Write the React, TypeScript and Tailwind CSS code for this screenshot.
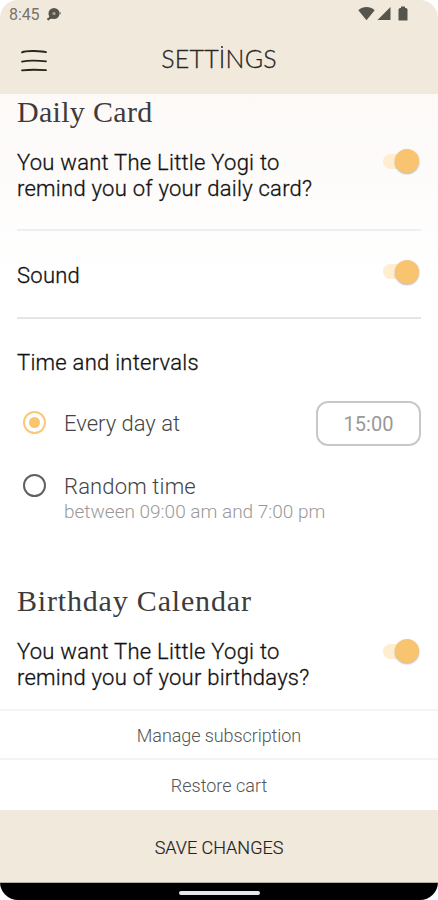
import { useState } from 'react'

type ToggleProps = {
  label: string
  checked: boolean
  onChange: () => void
}

function Toggle({ label, checked, onChange }: ToggleProps) {
  return (
    <button
      role="switch"
      aria-checked={checked}
      aria-label={label}
      onClick={onChange}
      className={`flex h-6 w-9 shrink-0 items-center ${checked ? 'justify-end' : 'justify-start'}`}
    >
      <span className="flex h-[15px] w-9 items-center rounded-full bg-[#feedcf]">
        <span
          className={`h-6 w-6 shrink-0 rounded-full bg-[#f9c46f] shadow-[0_1px_2px_rgba(0,0,0,0.3)] ${checked ? 'ml-auto' : ''}`}
        />
      </span>
    </button>
  )
}

function Radio({ checked }: { checked: boolean }) {
  return (
    <span
      className={`flex h-[23px] w-[23px] shrink-0 items-center justify-center rounded-full border-2 ${checked ? 'border-[#fac879]' : 'border-[#606060]'}`}
    >
      {checked && <span className="h-[11px] w-[11px] rounded-full bg-[#fbc46c]" />}
    </span>
  )
}

function StatusBar() {
  return (
    <div className="flex h-7 items-center justify-between pr-[30px] pl-[9px] text-[#57544c]">
      <div className="flex items-center gap-2 pt-px">
        <span className="text-base font-normal tracking-[-0.1px] text-[#77736b]">8:45</span>
        <svg className="h-4 w-4" viewBox="0 0 16 16" fill="currentColor">
          <circle cx="7" cy="6.5" r="5.5" />
          <circle cx="1.4" cy="12.1" r="1.3" />
          <path d="M3 8.5L1 12h3.5L6 9.5z" />
          <circle cx="7" cy="6.5" r="1.6" fill="#aaa69d" />
          <path d="M12.5 4.5l1.5 1v1.5l-1.5 1z" opacity="0.6" />
        </svg>
      </div>
      <div className="flex items-center pb-px">
        <svg className="h-[15px] w-[17px]" viewBox="0 0 17 15" fill="currentColor">
          <path d="M0.3 4.2C5 -.1 12 -.1 16.7 4.2L8.5 14.2z" />
        </svg>
        <svg className="ml-0.5 h-[15px] w-[14px]" viewBox="0 0 14 15" fill="currentColor">
          <path d="M13.5 1v13H.5z" />
        </svg>
        <svg className="ml-[7px] h-[15px] w-[10px]" viewBox="0 0 10 15" fill="currentColor">
          <path d="M3 .5h4V2h1.3L9.5 3.2V14.5h-9V3.2L1.7 2H3z" />
        </svg>
      </div>
    </div>
  )
}

export default function App() {
  const [dailyCard, setDailyCard] = useState(true)
  const [sound, setSound] = useState(true)
  const [birthdays, setBirthdays] = useState(true)
  const [interval, setIntervalType] = useState('daily')

  return (
    <div className="bg-white font-['Roboto',sans-serif]">
      <div className="flex h-[900px] w-[438px] flex-col overflow-hidden rounded-[18px] bg-white">
        {/* Header */}
        <header className="h-[94px] shrink-0 bg-[#f1eadc]">
          <StatusBar />
          <div className="grid h-[62px] grid-cols-[80px_1fr_80px] items-center">
            <button aria-label="Menu" className="pt-[3px] pl-[20px]">
              <svg className="h-6 w-7" viewBox="0 0 28 24" fill="none" stroke="#29251f" strokeWidth="1.8" strokeLinecap="round">
                <path d="M2 3.4Q5 1.8 14 2T26 3.2" />
                <path d="M2 12.6Q8 11.4 14 11.6T26 12.4" />
                <path d="M2 21.4Q12 20.2 26 21.2" />
              </svg>
            </button>
            <h1 className="pb-[2px] text-center font-['Lato',sans-serif] text-[25px] leading-none font-light tracking-[0.2px] text-[#29251f] [-webkit-text-stroke:0.3px_#29251f]">
              SETT
              <span className="relative">
                I
                <span className="absolute top-[3px] left-1/2 h-[2px] w-[2px] -translate-x-1/2 rounded-full bg-[#29251f]" />
              </span>
              NGS
            </h1>
          </div>
        </header>

        {/* Settings list */}
        <main className="h-[615px] shrink-0 bg-linear-to-b from-[#fcf9f7] to-white to-30% px-[17px]">
          <section>
            <h2 className="h-[55px] pt-0.5 font-['Liberation_Serif',serif] text-[30px] leading-8 tracking-[0.3px] text-[#3c3c3c]">Daily Card</h2>
            <div className="flex h-[80px] items-start justify-between pr-[2px]">
              <p className="pt-px text-[22px] leading-[26px] font-light tracking-[0.26px] text-[#111] [-webkit-text-stroke:0.3px_#111]">
                You want The Little Yogi to
                <br />
                remind you of your daily card?
              </p>
              <Toggle label="Daily card reminder" checked={dailyCard} onChange={() => setDailyCard(!dailyCard)} />
            </div>
            <div className="h-[2px] bg-[#efefef]" />
            <div className="flex h-[86px] items-center justify-between pr-[2px]">
              <span className="pt-[3px] text-[22px] font-light tracking-[0.26px] text-[#111] [-webkit-text-stroke:0.3px_#111]">Sound</span>
              <div className="pb-[5px]">
                <Toggle label="Sound" checked={sound} onChange={() => setSound(!sound)} />
              </div>
            </div>
            <div className="h-[2px] bg-[#e5e5e5]" />
          </section>

          <section className="h-[266px]">
            <h3 className="pt-[30px] text-[22px] leading-[28px] font-light tracking-[0.26px] text-[#111] [-webkit-text-stroke:0.3px_#111]">Time and intervals</h3>
            <div className="mt-[24px] flex h-[45px] items-center justify-between">
              <button className="flex items-center gap-[18px] pl-[6px]" onClick={() => setIntervalType('daily')}>
                <span className="pb-[2px]">
                  <Radio checked={interval === 'daily'} />
                </span>
                <span className="text-[22px] font-light text-[#444]">Every day at</span>
              </button>
              <span className="flex h-[45px] w-[105px] items-center justify-center rounded-[12px] border-2 border-[#c8c8c8] pt-px text-[20px] text-[#999]">
                15:00
              </span>
            </div>
            <button className="mt-[27px] flex gap-[18px] pl-[6px] text-left" onClick={() => setIntervalType('random')}>
              <span className="pt-px">
                <Radio checked={interval === 'random'} />
              </span>
              <span className="flex flex-col">
                <span className="text-[22px] leading-[28px] font-light tracking-[0.15px] text-[#444]">Random time</span>
                <span className="text-[19px] leading-[22px] font-light text-[#999]">between 09:00 am and 7:00 pm</span>
              </span>
            </button>
          </section>

          <section>
            <h2 className="h-[54px] font-['Liberation_Serif',serif] text-[30px] leading-8 tracking-[0.82px] text-[#3c3c3c]">Birthday Calendar</h2>
            <div className="flex items-start justify-between pr-[2px]">
              <p className="text-[22px] leading-[26px] font-light tracking-[0.26px] text-[#111] [-webkit-text-stroke:0.3px_#111]">
                You want The Little Yogi to
                <br />
                remind you of your birthdays?
              </p>
              <Toggle label="Birthday reminder" checked={birthdays} onChange={() => setBirthdays(!birthdays)} />
            </div>
          </section>
        </main>

        {/* Bottom actions */}
        <button className="h-[49px] shrink-0 border-t-2 border-[#f4f4f4] pt-[2px] text-[18px] font-light tracking-[-0.08px] text-[#555]">Manage subscription</button>
        <button className="h-[52px] shrink-0 border-t-2 border-[#f4f4f4] text-[18px] font-light text-[#555]">Restore cart</button>
        <button className="h-[73px] shrink-0 border-b border-[#b5afa2] bg-[#f1eadc] pt-[2px] text-[18px] font-light text-[#25221d] [-webkit-text-stroke:0.2px_#25221d]">SAVE CHANGES</button>
        <div className="flex h-[17px] shrink-0 items-center justify-center bg-black">
          <span className="mt-[2px] h-[4px] w-[81px] rounded-full bg-[#e8e8e8]" />
        </div>
      </div>
    </div>
  )
}
